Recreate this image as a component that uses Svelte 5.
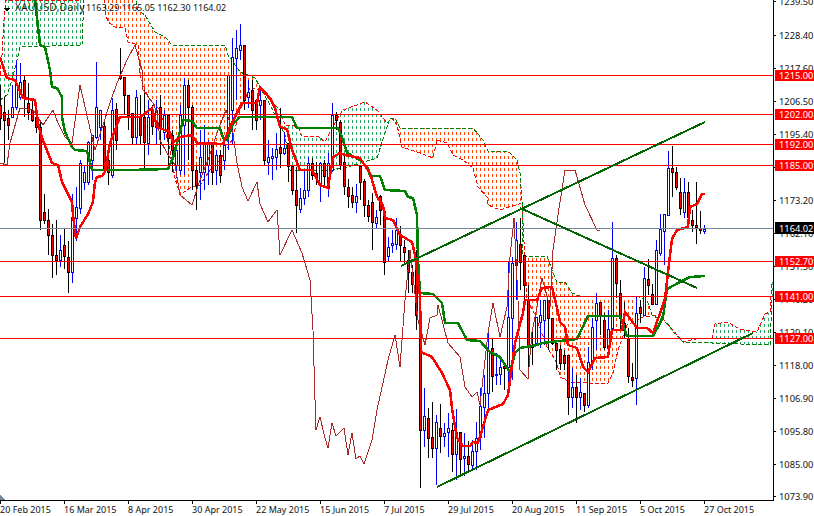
<script>
  const W = 773;
  const H = 500;

  // bars in pixel rows: high, body top, body bottom, low, direction
  const rows = `85 105 118 130 d|97 112 120 163 d|110 118 125 140 d|85 107 117 118 u|60 83 107 110 u|63 82 97 100 u|75 80 97 117 d|83 103 112 120 d|100 110 120 122 d|110 117 127 133 d|120 127 220 230 d|194 212 220 224 d|209 220 235 255 d|224 235 255 278 d|220 255 260 275 d|235 250 260 267 u|229 245 256 269 d|241 257 272 293 d|194 217 272 283 u|187 207 218 241 u|160 163 208 214 u|165 172 182 190 u|141 142 182 185 u|135 135 160 180 u|62 107 137 139 u|110 110 127 140 u|122 126 170 175 d|157 160 172 185 d|98 110 175 178 u|103 109 140 150 d|48 75 78 80 d|77 77 95 115 d|95 95 115 130 d|113 113 137 145 d|90 97 137 145 u|95 116 135 145 d|90 117 142 168 d|100 117 143 155 u|105 110 126 135 d|100 110 127 145 u|95 107 128 155 d|110 115 132 140 u|115 115 138 170 d|130 135 150 172 d|140 150 165 178 u|105 115 170 175 u|78 85 125 175 u|80 85 107 160 d|105 107 170 190 d|165 170 185 210 d|130 157 172 200 u|125 143 172 190 u|140 143 165 185 u|142 145 172 185 d|150 155 170 185 u|150 155 175 183 d|140 145 160 170 u|75 75 130 150 u|38 57 110 145 u|30 48 58 100 u|24 45 50 60 u|45 45 100 110 d|80 92 97 108 u|80 90 110 130 d|100 100 120 130 d|90 100 105 120 u|100 100 160 165 d|140 157 162 175 u|148 156 158 180 u|133 149 157 170 u|108 147 153 168 d|132 148 153 155 u|143 143 166 182 d|165 166 190 195 d|167 190 205 233 d|188 198 209 213 u|170 190 198 205 u|157 163 190 197 u|158 163 175 180 d|162 173 177 185 d|162 163 185 202 u|160 163 176 185 d|153 163 188 197 u|103 115 170 172 u|112 115 120 130 d|120 122 165 170 d|153 162 186 195 d|179 187 196 208 d|187 195 202 208 d|184 196 202 213 u|165 166 182 200 d|179 181 205 217 d|200 205 216 222 d|193 202 222 250 d|210 217 223 228 u|195 196 210 225 d|210 211 262 275 d|237 247 256 262 u|230 243 245 253 u|218 230 244 250 u|226 235 245 262 d|240 247 252 265 d|250 260 272 293 d|265 272 284 293 d|250 260 315 330 d|316 317 430 488 d|388 416 430 447 u|408 418 438 458 d|402 437 448 458 d|415 422 448 485 u|404 428 436 453 d|423 433 436 447 u|413 428 432 457 u|423 430 454 472 d|409 432 454 480 u|432 432 459 475 d|433 456 458 476 u|441 456 464 472 d|440 451 465 470 u|422 438 451 470 u|388 406 437 450 u|375 393 407 438 u|333 350 393 410 u|338 348 376 392 d|353 374 375 385 u|358 367 374 385 u|363 366 368 390 d|262 317 367 387 u|257 263 318 380 u|222 240 265 300 u|218 244 262 290 d|255 255 285 310 d|285 300 345 367 d|330 345 347 365 d|320 317 343 345 u|300 315 322 348 u|315 300 320 345 u|300 300 318 350 d|318 318 343 345 d|340 343 350 370 d|345 349 363 370 d|350 355 363 370 d|355 355 397 415 d|368 387 397 408 u|375 387 397 423 d|378 392 397 410 u|395 393 405 412 d|347 362 405 408 u|318 327 363 370 u|293 303 320 350 u|302 302 316 335 d|313 320 347 350 d|310 329 348 355 u|222 258 328 330 u|255 258 283 298 d|280 293 318 330 d|302 323 330 338 d|328 338 376 383 d|363 377 380 387 d|297 313 378 405 u|300 307 313 323 d|267 278 315 315 u|259 279 285 295 d|284 294 304 305 d|240 250 304 305 u|214 229 253 256 u|214 214 231 265 u|151 168 215 216 u|146 168 172 197 d|167 172 187 190 d|178 192 208 215 d|178 192 212 218 u|182 192 217 228 d|210 220 225 232 d|182 225 227 244 d|211 228 230 234 d|225 229 231 234 u`;
  const bars = rows.split('|').map((r, i) => {
    const [h, t, b, l, dir] = r.split(' ');
    return { x: 4 * i + 0.5, h: +h, t: +t, b: +b, l: +l, up: dir === 'u' };
  });

  const spanA = [[0,75],[2,55],[4,20],[6,0],[80,0],[84,-5],[104,-5],[106,15],[108,22],[115,27],[125,28],[128,42],[138,45],[140,75],[145,90],[150,100],[160,110],[170,150],[175,178],[180,195],[190,188],[200,185],[210,170],[220,160],[232,140],[240,110],[250,88],[260,90],[270,100],[280,110],[285,125],[290,125],[298,127],[302,136],[318,136],[325,142],[332,128],[343,110],[365,102],[377,110],[387,123],[392,118],[397,125],[402,147],[420,153],[433,158],[437,140],[447,143],[453,155],[463,160],[473,168],[478,187],[487,197],[488,205],[500,210],[522,203],[527,300],[535,315],[547,347],[557,363],[560,377],[570,382],[587,383],[608,383],[613,373],[618,350],[627,325],[633,322],[643,317],[660,315],[683,342],[700,338],[712,338],[715,324],[727,322],[740,329],[757,332],[765,314],[770,312],[772,282]];
  const spanB = [[0,100],[7,95],[12,80],[17,60],[20,47],[82,45],[84,-5],[135,-5],[138,10],[145,15],[155,32],[165,37],[172,45],[225,45],[228,55],[240,72],[255,78],[270,105],[285,135],[290,170],[330,170],[345,168],[377,158],[385,133],[390,118],[395,118],[400,128],[473,128],[483,140],[488,151],[508,151],[517,160],[520,173],[522,200],[523,256],[547,256],[553,273],[557,282],[565,282],[572,293],[580,296],[637,296],[647,300],[652,315],[668,324],[673,332],[683,342],[770,345],[772,300]];
  const kijun = [[35,0],[40,45],[45,47],[50,70],[52,87],[57,88],[62,97],[62,117],[65,132],[72,147],[75,150],[87,151],[92,170],[130,170],[168,169],[173,158],[183,120],[192,121],[197,128],[220,128],[223,138],[227,140],[233,124],[240,117],[292,117],[297,128],[338,128],[342,137],[347,153],[360,160],[368,168],[370,176],[380,176],[385,190],[405,191],[408,197],[413,198],[417,215],[418,260],[420,293],[433,294],[442,303],[445,323],[458,323],[467,340],[480,341],[490,352],[500,357],[510,372],[515,353],[520,348],[537,345],[542,343],[577,339],[588,316],[620,316],[627,336],[653,336],[658,327],[663,317],[667,289],[680,282],[690,277],[705,276]];
  const tenkan = [[0,57],[7,78],[15,80],[23,98],[35,100],[38,123],[42,138],[52,163],[58,165],[62,182],[72,202],[73,215],[76,239],[80,227],[88,214],[93,202],[95,182],[97,177],[102,176],[105,172],[110,143],[120,117],[140,117],[152,108],[157,127],[170,132],[173,143],[180,137],[192,135],[197,143],[223,144],[230,127],[242,103],[257,103],[260,87],[270,98],[275,108],[280,127],[287,129],[292,150],[300,170],[312,170],[320,185],[328,188],[333,157],[340,153],[345,155],[360,158],[370,173],[377,197],[383,205],[385,218],[393,220],[400,235],[412,242],[415,255],[420,296],[421,352],[432,357],[442,373],[450,390],[452,408],[457,438],[463,446],[470,446],[473,442],[478,443],[482,430],[488,410],[503,404],[508,395],[515,343],[523,313],[525,300],[537,300],[542,288],[552,287],[557,308],[560,322],[565,327],[568,345],[577,348],[583,367],[588,372],[595,358],[608,357],[612,330],[622,330],[625,312],[637,328],[647,328],[653,333],[658,319],[665,299],[668,272],[672,239],[677,230],[688,227],[690,207],[697,204],[702,194],[705,194]];
  const chikou = [[0,163],[7,165],[10,143],[20,108],[33,110],[43,125],[53,110],[58,123],[65,137],[72,143],[80,85],[88,120],[95,150],[110,103],[117,83],[127,60],[135,45],[142,70],[143,90],[153,103],[157,113],[160,140],[167,153],[175,165],[180,195],[192,205],[200,180],[208,160],[218,130],[226,110],[233,133],[237,163],[242,187],[248,201],[257,182],[260,204],[268,222],[277,210],[280,255],[292,230],[302,253],[310,280],[313,330],[315,400],[316,430],[320,417],[325,438],[328,448],[332,423],[336,436],[344,428],[348,455],[352,433],[356,459],[360,456],[364,464],[372,440],[377,410],[388,360],[395,335],[400,367],[405,300],[410,250],[418,320],[425,345],[430,318],[437,315],[438,305],[448,343],[460,357],[465,387],[472,397],[477,392],[480,405],[488,333],[493,303],[500,337],[507,307],[510,257],[514,218],[518,300],[520,370],[528,379],[532,332],[537,307],[542,278],[550,307],[553,250],[558,215],[565,170],[575,170],[585,205],[597,230],[600,230]];

  const levels = [[75,'1215.00'],[114,'1202.00'],[144,'1192.00'],[165,'1185.00'],[261,'1152.70'],[296,'1141.00'],[338,'1127.00']];
  const scale = [[1,'1239.50'],[35,'1228.40'],[68,'1217.60'],[101,'1206.50'],[134,'1195.40'],[167,'1184.30'],[200,'1173.20'],[233,'1162.10'],[266,'1151.30'],[299,'1140.20'],[332,'1129.10'],[365,'1118.00'],[398,'1106.90'],[431,'1095.80'],[464,'1085.00'],[496,'1073.90']];
  const dates = ['20 Feb 2015','16 Mar 2015','8 Apr 2015','30 Apr 2015','22 May 2015','15 Jun 2015','7 Jul 2015','29 Jul 2015','20 Aug 2015','11 Sep 2015','5 Oct 2015','27 Oct 2015'];

  function at(pts, x) {
    for (let i = 1; i < pts.length; i++) {
      if (x <= pts[i][0]) {
        const [x0, y0] = pts[i - 1];
        const [x1, y1] = pts[i];
        return x1 === x0 ? y1 : y0 + (y1 - y0) * (x - x0) / (x1 - x0);
      }
    }
    return pts[pts.length - 1][1];
  }

  const line = (pts) => pts.map((p) => p.join(',')).join(' ');

  // cloud hatch, one dotted column per bar
  const hatch = [];
  for (let x = 0.5; x < W; x += 4) {
    const a = at(spanA, x);
    const b = at(spanB, x);
    const top = Math.max(Math.round(Math.min(a, b)), 0);
    const bottom = Math.round(Math.max(a, b));
    if (bottom > top) hatch.push({ x, top, bottom, bull: a < b, offset: top % 6 });
  }
</script>

<div class="chart">
  <svg class="plot" width={W} height={H}>
    {#each hatch as c}
      <line
        class={c.bull ? 'hatch bull' : 'hatch bear'}
        x1={c.x} x2={c.x} y1={c.top} y2={c.bottom}
        stroke-dashoffset={c.offset}
      />
    {/each}
    <polyline class="span-a" points={line(spanA)} />
    <polyline class="span-b" points={line(spanB)} />

    {#each bars as b}
      <line class={b.up ? 'wick up' : 'wick'} x1={b.x} x2={b.x} y1={b.h} y2={b.l} />
      <rect class={b.up ? 'body up' : 'body'} x={b.x - 1} y={b.t + 0.5} width="2" height={Math.max(b.b - b.t, 1)} />
    {/each}

    <polyline class="chikou" points={line(chikou)} />
    <polyline class="kijun" points={line(kijun)} />
    <polyline class="tenkan" points={line(tenkan)} />

    <line class="last" x1="0" x2={W} y1="228.5" y2="228.5" />
    {#each levels as l}
      <line class="level" x1="0" x2={W} y1={l[0] + 0.5} y2={l[0] + 0.5} />
    {/each}

    <line class="trend" x1="401" y1="266" x2="705" y2="122" />
    <line class="trend" x1="520" y1="208" x2="697" y2="288" />
    <line class="trend" x1="437" y1="487" x2="753" y2="333" />

    <polygon class="marker" points="3,8 11,8 7,11" />
    <text class="title name" x="15" y="11">XAUUSD,Daily</text>
    <text class="title" x="86" y="11">1163.29 1165.05 1162.30 1164.02</text>
    <polygon class="shift" points="0,495 5,500 0,500" />
  </svg>

  <svg class="prices" width="41" height={H}>
    <line class="axis" x1="0.5" x2="0.5" y1="0" y2={H} />
    {#each scale as s}
      <line class="axis" x1="0" x2="3" y1={s[0] + 0.5} y2={s[0] + 0.5} />
      <text class="tick price" x="6" y={s[0] + 4}>{s[1]}</text>
    {/each}
    {#each levels as l}
      <rect class="tag" x="2" y={l[0] - 5} width="39" height="11" />
      <text class="tag-text price" x="6" y={l[0] + 4}>{l[1]}</text>
    {/each}
    <rect class="tag now" x="2" y="222" width="39" height="12" />
    <text class="tag-text price" x="6" y="232">1164.02</text>
  </svg>

  <svg class="dates" width="814" height="16">
    <line class="axis" x1="0" x2="774" y1="0.5" y2="0.5" />
    {#each dates as d, i}
      <line class="axis" x1={64 * i + 0.5} x2={64 * i + 0.5} y1="0" y2="4" />
      <text class="tick" x={64 * i} y="13">{d}</text>
    {/each}
  </svg>
</div>

<style>
  :global(body) {
    margin: 0;
    background: #fff;
  }

  .chart {
    display: grid;
    grid-template-columns: 773px 41px;
    grid-template-rows: 500px 16px;
    width: 814px;
    height: 516px;
    overflow: hidden;
  }

  svg {
    display: block;
    shape-rendering: crispEdges;
  }

  .dates {
    grid-column: 1 / 3;
  }

  polyline {
    fill: none;
  }

  .hatch {
    stroke-width: 1;
    stroke-dasharray: 3 3;
  }

  .bull {
    stroke: #2aa866;
  }

  .bear {
    stroke: #ff4500;
  }

  .span-a {
    stroke: #ff0000;
    stroke-width: 1;
    stroke-dasharray: 4 2;
  }

  .span-b {
    stroke: #008000;
    stroke-width: 1;
    stroke-dasharray: 4 2;
  }

  .wick {
    stroke: #000;
    stroke-width: 1;
  }

  .wick.up {
    stroke: #0000ff;
  }

  .body {
    fill: #ff0000;
    stroke: #000;
    stroke-width: 1;
  }

  .body.up {
    fill: #fff;
    stroke: #0000ff;
  }

  .chikou {
    stroke: #a52a2a;
    stroke-width: 1;
  }

  .kijun {
    stroke: #008000;
    stroke-width: 2.5;
  }

  .tenkan {
    stroke: #ff0000;
    stroke-width: 2.5;
  }

  .last {
    stroke: #778899;
    stroke-width: 1;
  }

  .level {
    stroke: #ff0000;
    stroke-width: 1;
  }

  .trend {
    stroke: #006400;
    stroke-width: 2;
  }

  .marker {
    fill: #000;
  }

  .shift {
    fill: #778899;
  }

  .axis {
    stroke: #000;
    stroke-width: 1;
  }

  text {
    font-family: "Noto Sans", "DejaVu Sans", sans-serif;
    font-size: 9px;
    shape-rendering: auto;
  }

  .price {
    font-size: 9.3px;
  }

  .name {
    font-size: 10px;
    letter-spacing: 0.4px;
  }

  .tick,
  .title {
    fill: #111;
  }

  .tag {
    fill: #ff0000;
  }

  .tag.now {
    fill: #000;
  }

  .tag-text {
    fill: #fff;
  }
</style>
